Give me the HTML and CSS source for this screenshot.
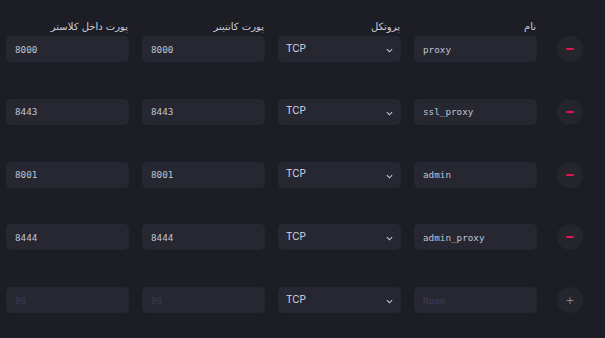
FILE: index.html
```html
<!DOCTYPE html>
<html lang="fa" dir="rtl">
<head>
  <meta charset="UTF-8" />
  <title>پورت‌ها</title>
  <link rel="stylesheet" href="styles.css">
</head>
<body>
  <div class="ports">
    <div class="row head">
      <span class="cell-btn"></span>
      <label>نام</label>
      <label>پروتکل</label>
      <label>پورت کانتینر</label>
      <label>پورت داخل کلاستر</label>
    </div>

    <div class="row">
      <button class="round minus"><span></span></button>
      <input class="field" type="text" value="proxy" dir="ltr" autofocus />
      <div class="select"><select><option>TCP</option><option>UDP</option></select><svg viewBox="0 0 8 5" width="7" height="5"><path d="M1 1l3 3 3-3" fill="none" stroke="#c9cad6" stroke-width="1.2"/></svg></div>
      <input class="field" type="text" value="8000" dir="ltr" />
      <input class="field" type="text" value="8000" dir="ltr" />
    </div>

    <div class="row">
      <button class="round minus"><span></span></button>
      <input class="field" type="text" value="ssl_proxy" dir="ltr" />
      <div class="select"><select><option>TCP</option><option>UDP</option></select><svg viewBox="0 0 8 5" width="7" height="5"><path d="M1 1l3 3 3-3" fill="none" stroke="#c9cad6" stroke-width="1.2"/></svg></div>
      <input class="field" type="text" value="8443" dir="ltr" />
      <input class="field" type="text" value="8443" dir="ltr" />
    </div>

    <div class="row">
      <button class="round minus"><span></span></button>
      <input class="field" type="text" value="admin" dir="ltr" />
      <div class="select"><select><option>TCP</option><option>UDP</option></select><svg viewBox="0 0 8 5" width="7" height="5"><path d="M1 1l3 3 3-3" fill="none" stroke="#c9cad6" stroke-width="1.2"/></svg></div>
      <input class="field" type="text" value="8001" dir="ltr" />
      <input class="field" type="text" value="8001" dir="ltr" />
    </div>

    <div class="row">
      <button class="round minus"><span></span></button>
      <input class="field" type="text" value="admin_proxy" dir="ltr" />
      <div class="select"><select><option>TCP</option><option>UDP</option></select><svg viewBox="0 0 8 5" width="7" height="5"><path d="M1 1l3 3 3-3" fill="none" stroke="#c9cad6" stroke-width="1.2"/></svg></div>
      <input class="field" type="text" value="8444" dir="ltr" />
      <input class="field" type="text" value="8444" dir="ltr" />
    </div>

    <div class="row">
      <button class="round plus">+</button>
      <input class="field" type="text" placeholder="Name" dir="ltr" />
      <div class="select"><select><option>TCP</option><option>UDP</option></select><svg viewBox="0 0 8 5" width="7" height="5"><path d="M1 1l3 3 3-3" fill="none" stroke="#c9cad6" stroke-width="1.2"/></svg></div>
      <input class="field" type="text" placeholder="80" dir="ltr" />
      <input class="field" type="text" placeholder="80" dir="ltr" />
    </div>
  </div>
</body>
</html>
```

FILE: styles.css
```css
html, body {
  margin: 0;
  padding: 0;
  background: #1d1d25;
  height: 100%;
}
body {
  font-family: "DejaVu Sans", sans-serif;
  color: #c9cad6;
}
.ports {
  display: flex;
  flex-direction: column;
  gap: 36.75px;
  padding: 0 22px 0 6px;
}
.row {
  display: grid;
  grid-template-columns: 33px 123px 123px 123px 123px;
  column-gap: 13px;
  align-items: center;
}
.head {
  height: 36px;
  align-items: end;
  margin-bottom: -36.75px;
}
.head label {
  font-size: 10px;
  color: #cfd0da;
  padding-bottom: 4px;
  text-align: right;
  padding-right: 1px;
}
.field {
  box-sizing: border-box;
  height: 26px;
  width: 123px;
  border: none;
  outline: none;
  border-radius: 5px;
  background: #272731;
  color: #bfc3d2;
  font-family: "DejaVu Sans Mono", monospace;
  font-size: 9.3px;
  padding: 0 9px;
  caret-color: #e8e8ee;
}
.field::placeholder {
  color: #393b50;
}
.select {
  position: relative;
  height: 26px;
}
.select select {
  appearance: none;
  box-sizing: border-box;
  width: 100%;
  height: 26px;
  border: none;
  outline: none;
  border-radius: 5px;
  background: #272731;
  color: #d8d9e4;
  font-family: "Inter", sans-serif;
  font-size: 10px;
  direction: ltr;
  padding: 0 8px 3px;
}
.select svg {
  position: absolute;
  right: 8px;
  top: 12px;
}
.round {
  width: 26px;
  height: 26px;
  border-radius: 50%;
  border: none;
  background: #25252e;
  padding: 0;
  display: flex;
  align-items: center;
  justify-content: center;
  cursor: pointer;
}
.minus span {
  width: 8px;
  height: 2px;
  background: #e0164a;
  border-radius: 1px;
}
.plus {
  color: #8a8b99;
  font-size: 10px;
  font-family: "DejaVu Sans", sans-serif;
}
```
